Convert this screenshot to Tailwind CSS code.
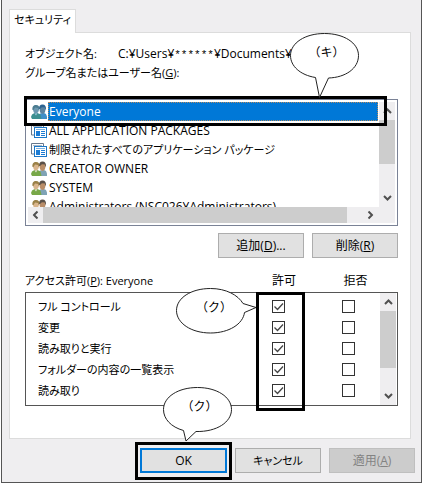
<!DOCTYPE html>
<html lang="ja">
<head>
<meta charset="utf-8">
<meta name="viewport" content="width=device-width, initial-scale=1">
<title>セキュリティ</title>
<script src="https://cdn.jsdelivr.net/npm/@tailwindcss/browser@4"></script>
</head>
<body class="bg-white pl-px pr-[9px] font-['Open_Sans','Noto_Sans_CJK_JP',sans-serif] text-[12px] leading-[18px] text-black [font-feature-settings:'palt']">
<svg class="hidden" aria-hidden="true">
  <symbol id="people" viewBox="0 0 16 16">
    <path d="M7 15v-3l2-2.500 4-.5 2 1 1 2.500V15z" fill="#7fa3b5"/>
    <path d="M8.500 5c0-2.500 1-4 3-4s3 1.500 3 4-1 5-3 5-3-2.500-3-5z" fill="#b98d68"/>
    <path d="M8 5c0-3 1-4.500 3.500-4.500S15 2 15 5l-.6 1-.5-2.500-3-.3L9 5z" fill="#5a5048"/>
    <path d="M0 13l1-2.500L3.500 9h3l3 1.500L10.500 15H1z" fill="#78a848"/>
    <path d="M3.500 9.500L5 11.500 6.500 9z" fill="#e4e8d8"/>
    <path d="M2 5c0-2.500 1-3.500 3-3.500S8 3 8 5 7 9.500 5 9.500 2 7.500 2 5z" fill="#d9b58d"/>
    <path d="M1.500 6C1 2.500 2.500 1 5 1s3.500 1.500 3.300 4L7.500 6 7 4 4 3.500 2.500 6z" fill="#9a8148"/>
  </symbol>
  <symbol id="people-selected" viewBox="0 0 16 16">
    <path d="M7 15v-3l2-2.500 4-.5 2 1 1 2.500V15z" fill="#3f8fc8"/>
    <path d="M8.500 5c0-2.500 1-4 3-4s3 1.500 3 4-1 5-3 5-3-2.500-3-5z" fill="#5c84a0"/>
    <path d="M8 5c0-3 1-4.500 3.500-4.500S15 2 15 5l-.6 1-.5-2.500-3-.3L9 5z" fill="#2c6290"/>
    <path d="M0 13l1-2.500L3.500 9h3l3 1.500L10.500 15H1z" fill="#3c8f90"/>
    <path d="M3.500 9.500L5 11.500 6.500 9z" fill="#9cc4dc"/>
    <path d="M2 5c0-2.500 1-3.500 3-3.500S8 3 8 5 7 9.500 5 9.500 2 7.500 2 5z" fill="#6c98b0"/>
    <path d="M1.500 6C1 2.500 2.500 1 5 1s3.500 1.500 3.300 4L7.500 6 7 4 4 3.500 2.500 6z" fill="#4c7c90"/>
  </symbol>
  <symbol id="package" viewBox="0 0 16 16">
    <path d="M.5 12V1.500h12V4" fill="#fff" stroke="#68788c"/>
    <path d="M2 3.500h9" stroke="#a9b8c8"/>
    <path d="M.5 12H3" stroke="#68788c"/>
    <rect x="3.500" y="4.500" width="12" height="10" fill="#fff" stroke="#1c78c8"/>
    <path d="M5 6.500h9" stroke="#7fb2e0"/>
    <rect x="5" y="8" width="4" height="5" fill="#1c7cd4"/>
    <path d="M10 8.500h4M10 10.500h4M10 12.500h4" stroke="#1c7cd4"/>
  </symbol>
  <symbol id="chevron" viewBox="0 0 9 6">
    <path d="M1 5l3.500-3.500L8 5" fill="none" stroke="#505050" stroke-width="2"/>
  </symbol>
</svg>

<main class="border border-t-0 border-[#555] bg-[#efeef0] pl-[7px] pr-[6px] pt-[9px] pb-[9px]">
  <div role="tablist" class="flex">
    <button role="tab" aria-selected="true" class="relative z-10 -mb-px h-6 w-[67px] border border-b-0 border-[#dcdcdc] bg-white pb-1 text-center text-[11px]">セキュリティ</button>
  </div>

  <section class="mr-1 border border-[#dcdcdc] bg-white pt-[12px] pb-[32px] pl-[15px] pr-[12px]">
    <div class="flex whitespace-nowrap">
      <span class="w-[93px] shrink-0 text-[11px]">オブジェクト名:</span>
      <span>C:¥Users¥</span>
      <span class="pt-px font-['Liberation_Mono',monospace] text-[11px]">******</span>
      <span>¥Documents¥S</span>
    </div>
    <h2 id="groups" class="text-[11px]">グループ名またはユーザー名(<u>G</u>):</h2>

    <div class="relative mt-[17px]">
      <div class="border border-[#7a8296] p-[2px]">
        <div class="flex h-[105px]">
          <ul role="listbox" aria-labelledby="groups" class="min-w-0 flex-1 overflow-hidden whitespace-nowrap leading-[19px]">
            <li role="option" aria-selected="true" class="flex h-[19px] items-center gap-px pl-[3px]"><svg class="size-4 shrink-0"><use href="#people-selected"/></svg><span class="mr-px flex-1 border border-dotted border-[#b08a60] bg-[#0078d7] leading-[17px] text-white">Everyone</span></li>
            <li role="option" class="flex h-[19px] items-center gap-[2px] pl-[3px]"><svg class="size-4 shrink-0"><use href="#package"/></svg>ALL APPLICATION PACKAGES</li>
            <li role="option" class="flex h-[19px] items-center gap-[2px] pl-[3px] text-[11px]"><svg class="size-4 shrink-0"><use href="#package"/></svg>制限されたすべてのアプリケーション パッケージ</li>
            <li role="option" class="flex h-[19px] items-center gap-[2px] pl-[3px]"><svg class="size-4 shrink-0"><use href="#people"/></svg>CREATOR OWNER</li>
            <li role="option" class="flex h-[19px] items-center gap-[2px] pl-[3px]"><svg class="size-4 shrink-0"><use href="#people"/></svg>SYSTEM</li>
            <li role="option" class="flex h-[19px] items-center gap-[2px] pl-[3px]"><svg class="size-4 shrink-0"><use href="#people"/></svg>Administrators (NSC026¥Administrators)</li>
          </ul>
          <div class="flex w-4 flex-col items-center bg-[#efeef0]">
            <svg class="my-[6px] h-[6px] w-[9px] shrink-0"><use href="#chevron"/></svg>
            <div class="h-[44px] w-full bg-[#cdcdcd]"></div>
            <svg class="mt-auto mb-[6px] h-[6px] w-[9px] shrink-0 rotate-180"><use href="#chevron"/></svg>
          </div>
        </div>
        <div class="flex h-4 items-center bg-[#efeef0]">
          <svg class="mx-[3px] h-[6px] w-[9px] shrink-0 -rotate-90"><use href="#chevron"/></svg>
          <div class="h-full flex-1 bg-[#cdcdcd]"></div>
          <svg class="ml-[19px] mr-5 h-[6px] w-[9px] shrink-0 rotate-90"><use href="#chevron"/></svg>
        </div>
      </div>
      <div class="absolute -top-[3px] -left-px right-[11px] h-[30px] border-3 border-black"></div>
      <div class="absolute -top-[66px] right-[39px] h-[66px] w-[69px]">
        <svg class="absolute inset-0" width="69" height="66" viewBox="0 0 69 66"><path d="M25.500 44.500C10 42 .5 33 .5 22.500.5 10 15 .5 34.500 .5S68.500 10 68.500 22.500c0 13-13 22-30 22.500L29.500 64.500z" fill="#fff" stroke="#222"/></svg>
        <span class="absolute left-[2px] top-[10px] w-[69px] text-center font-['Noto_Sans_CJK_JP',sans-serif] [font-feature-settings:normal]">（キ）</span>
      </div>
    </div>

    <div class="mt-[7px] flex justify-end gap-2">
      <button class="h-[25px] w-[86px] border border-[#adadad] bg-[#e1e1e1]">追加(<u>D</u>)...</button>
      <button class="h-[25px] w-[86px] border border-[#adadad] bg-[#e1e1e1]">削除(<u>R</u>)</button>
    </div>

    <div class="mt-[14px] mb-[2px] flex">
      <h2 class="flex-1 text-[11px]">アクセス許可(<u>P</u>): Everyone</h2>
      <span id="allow" class="w-[72px] text-center">許可</span>
      <span id="deny" class="w-[71px] text-center">拒否</span>
      <span class="w-[7px]"></span>
    </div>

    <div class="relative">
      <div class="flex h-[114px] border border-[#555] pr-px">
        <table class="mt-[3px] h-[105px] flex-1 table-fixed text-[11px]">
          <colgroup><col><col class="w-[76px]"><col class="w-[64px]"></colgroup>
          <tbody id="permissions"></tbody>
        </table>
        <div class="flex w-4 flex-col items-center bg-[#efeef0]">
          <svg class="my-[6px] h-[6px] w-[9px] shrink-0"><use href="#chevron"/></svg>
          <div class="h-[57px] w-full bg-[#cdcdcd]"></div>
          <svg class="mt-auto mb-[6px] h-[6px] w-[9px] shrink-0 rotate-180"><use href="#chevron"/></svg>
        </div>
      </div>
      <div class="absolute top-0 right-[93px] h-[119px] w-[49px] border-3 border-black"></div>
      <div class="absolute -top-1 right-[141px] h-[46px] w-[81px]">
        <svg class="absolute inset-0" width="81" height="46" viewBox="0 0 81 46"><path d="M67 15.500C62 7 50 .5 34.500 .5 15 .5.5 10 .5 22.500S15 45 34.500 45C53 45 67 36 68.500 24.500L80 19.500z" fill="#fff" stroke="#222"/></svg>
        <span class="absolute left-0 top-[10px] w-[76px] text-center font-['Noto_Sans_CJK_JP',sans-serif] [font-feature-settings:normal]">（ク）</span>
      </div>
    </div>
  </section>

  <footer class="mt-[9px] flex justify-end gap-2">
    <div class="relative">
      <button class="h-[25px] w-[87px] border-2 border-[#0078d7] bg-[#e1e1e1]">OK</button>
      <div class="absolute -inset-x-[5px] -top-[6px] -bottom-[7px] border-3 border-black"></div>
      <div class="absolute -top-[61px] left-[23px] h-[55px] w-[69px]">
        <svg class="absolute inset-0" width="69" height="55" viewBox="0 0 69 55"><path d="M20.500 43.500C8 40 .5 32 .5 22.500.5 10 15 .5 34.500.5S68.500 10 68.500 22.500 54 45 33 44.500L23 54z" fill="#fff" stroke="#222"/></svg>
        <span class="absolute left-[2px] top-[10px] w-[69px] text-center font-['Noto_Sans_CJK_JP',sans-serif] [font-feature-settings:normal]">（ク）</span>
      </div>
    </div>
    <button class="h-[25px] w-[86px] border border-[#adadad] bg-[#e1e1e1] text-[11px]">キャンセル</button>
    <button disabled class="h-[25px] w-[86px] border border-[#bfbfbf] bg-[#cccccc] text-[#838383]">適用(<u>A</u>)</button>
  </footer>
</main>

<script>
  const names = ['フル コントロール', '変更', '読み取りと実行', 'フォルダーの内容の一覧表示', '読み取り'];
  const box = (kind, i, on) => `<td class="p-0"><span class="relative mx-auto block size-[13px]">
    <input type="checkbox" id="${kind}${i}" aria-labelledby="${kind} name${i}" ${on ? 'checked' : ''} class="peer block size-[13px] appearance-none border border-[#333] bg-white">
    <svg class="pointer-events-none absolute inset-0 hidden peer-checked:block" viewBox="0 0 13 13"><path d="M2.500 6.500l3 3 5.500-6" fill="none" stroke="#444" stroke-width="1.300"/></svg></span></td>`;
  document.getElementById('permissions').innerHTML = names.map((n, i) =>
    `<tr class="h-[21px]"><th scope="row" class="p-0 pl-3 text-left font-normal whitespace-nowrap"><label id="name${i}" for="allow${i}">${n}</label></th>${box('allow', i, true)}${box('deny', i, false)}</tr>`).join('');
</script>
</body>
</html>
